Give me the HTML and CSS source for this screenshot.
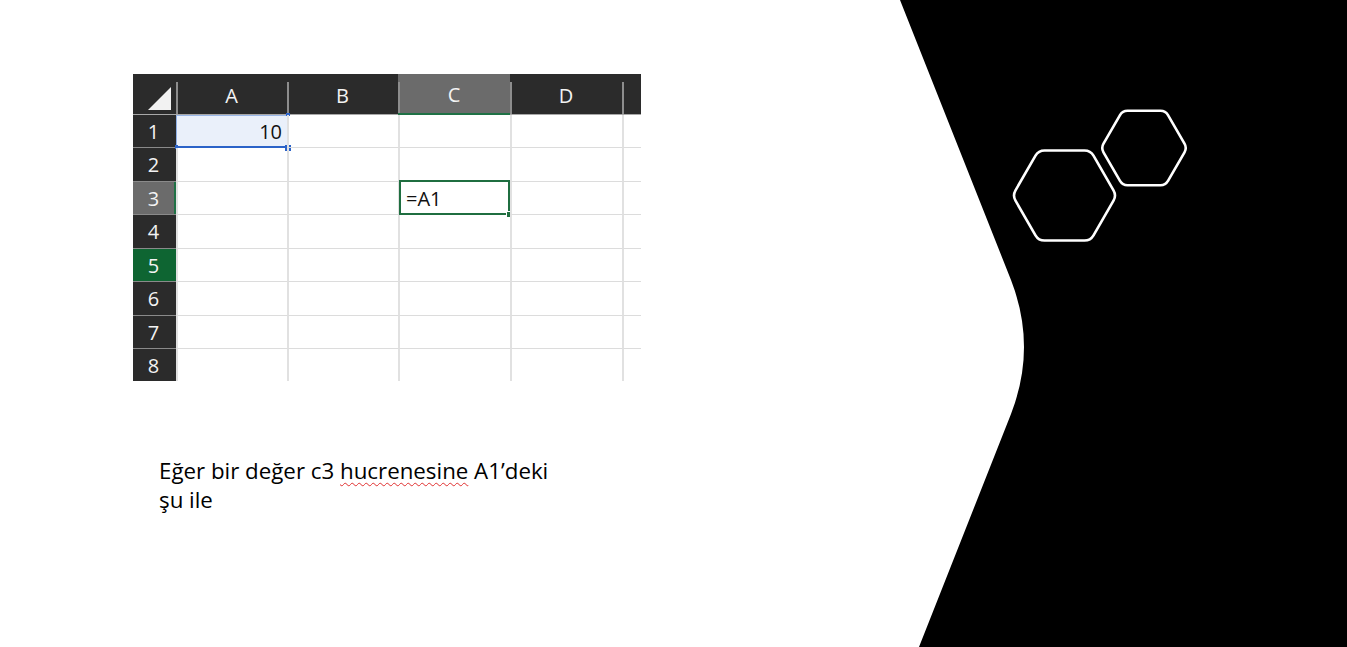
FILE: index.html
```html
<!DOCTYPE html>
<html lang="tr">
<head>
<meta charset="utf-8">
<title>Excel</title>
<link rel="stylesheet" href="styles.css">
</head>
<body>
<div class="slide">
  <div class="sheet">
    <div class="corner"><svg width="43" height="41" viewBox="0 0 43 41"><polygon points="15,36 38,36 38,13" fill="#f2f2f2"/></svg></div>
    <div class="ch">A</div>
    <div class="ch">B</div>
    <div class="ch ch-sel">C</div>
    <div class="ch">D</div>
    <div class="ch ch-last"></div>

    <div class="rh">1</div>
    <div class="cell cell-a1">10<span class="h h-tr"></span><span class="h h-bl"></span><span class="h h-br"></span></div>
    <div class="cell"></div><div class="cell"></div><div class="cell"></div><div class="cell"></div>

    <div class="rh">2</div>
    <div class="cell"></div><div class="cell"></div><div class="cell"></div><div class="cell"></div><div class="cell"></div>

    <div class="rh rh-sel">3</div>
    <div class="cell"></div><div class="cell"></div>
    <div class="cell cell-c3">=A1<span class="g-br"></span></div>
    <div class="cell"></div><div class="cell"></div>

    <div class="rh">4</div>
    <div class="cell"></div><div class="cell"></div><div class="cell"></div><div class="cell"></div><div class="cell"></div>

    <div class="rh rh-hover">5</div>
    <div class="cell"></div><div class="cell"></div><div class="cell"></div><div class="cell"></div><div class="cell"></div>

    <div class="rh">6</div>
    <div class="cell"></div><div class="cell"></div><div class="cell"></div><div class="cell"></div><div class="cell"></div>

    <div class="rh">7</div>
    <div class="cell"></div><div class="cell"></div><div class="cell"></div><div class="cell"></div><div class="cell"></div>

    <div class="rh rh-last">8</div>
    <div class="cell cell-last"></div><div class="cell cell-last"></div><div class="cell cell-last"></div><div class="cell cell-last"></div><div class="cell cell-last"></div>
  </div>

  <p class="caption">Eğer bir değer c3 <span class="spell">hucrenesine</span> A1’deki<br>şu ile</p>
</div>

<svg class="deco" width="447" height="647" viewBox="900 0 447 647">
  <path d="M900,0 L1011,280 Q1037,347 1011,414 L919,647 L1347,647 L1347,0 Z" fill="#000"/>
  <path d="M1015.5,190.3 L1035.5,155.7 Q1038.5,150.5 1044.5,150.5 L1084.5,150.5 Q1090.5,150.5 1093.5,155.7 L1113.5,190.3 Q1116.5,195.5 1113.5,200.7 L1093.5,235.3 Q1090.5,240.5 1084.5,240.5 L1044.5,240.5 Q1038.5,240.5 1035.5,235.3 L1015.5,200.7 Q1012.5,195.5 1015.5,190.3 Z" fill="none" stroke="#fff" stroke-width="2.6"/>
  <path d="M1103.5,143.7 L1120,115.1 Q1122.5,110.8 1127.5,110.8 L1160.5,110.8 Q1165.5,110.8 1168,115.1 L1184.5,143.7 Q1187,148 1184.5,152.3 L1168,180.9 Q1165.5,185.2 1160.5,185.2 L1127.5,185.2 Q1122.5,185.2 1120,180.9 L1103.5,152.3 Q1101,148 1103.5,143.7 Z" fill="none" stroke="#fff" stroke-width="2.6"/>
</svg>
</body>
</html>
```

FILE: styles.css
```css
html, body {
  margin: 0;
  padding: 0;
  background: #fff;
}

body {
  width: 1347px;
  height: 647px;
  overflow: hidden;
  position: relative;
  font-family: "Open Sans", "Noto Sans", sans-serif;
}

.slide {
  padding: 74px 0 0 133px;
}

.sheet {
  display: grid;
  grid-template-columns: 43px 111px 111px 112px 112px 19px;
  grid-template-rows: 41px 33px 34px 33px 34px 33px 34px 33px 32px;
  width: 508px;
  background: #fff;
}

.corner {
  background: #2b2b2b;
  border-bottom: 1px solid #a8a8a8;
}

.corner svg {
  display: block;
}

.ch {
  color: #f3f3f3;
  font-size: 20px;
  display: flex;
  align-items: center;
  justify-content: center;
  padding-top: 2px;
  box-sizing: border-box;
  border-bottom: 1px solid #a8a8a8;
  background: linear-gradient(#8d8d8d, #8d8d8d) 0 8px / 2px 32px no-repeat, #2b2b2b;
}

.ch-sel {
  background: linear-gradient(#8d8d8d, #8d8d8d) 0 8px / 2px 32px no-repeat, #6b6b6b;
  border-bottom: 2px solid #1f7145;
}

.rh {
  background: #2b2b2b;
  color: #f3f3f3;
  font-size: 20px;
  display: flex;
  align-items: center;
  justify-content: center;
  padding-right: 2px;
  box-sizing: border-box;
  border-bottom: 1px solid #8a8a8a;
}

.rh-last {
  border-bottom: none;
}

.rh-sel {
  background: #6b6b6b;
  box-shadow: inset -2px 0 0 #1f7145;
}

.rh-hover {
  background: #0e6532;
}

.cell {
  border-left: 2px solid #e1e1e1;
  border-bottom: 1px solid #dcdcdc;
  box-sizing: border-box;
  font-size: 20px;
  color: #111;
  display: flex;
  align-items: center;
  position: relative;
}

.cell-last {
  border-bottom: none;
}

.cell-a1 {
  background: #eaf0fa;
  justify-content: flex-end;
  padding-right: 5px;
  padding-top: 1px;
  border-left: 1px solid #8fb0e6;
}

.cell-a1::before {
  content: "";
  position: absolute;
  left: -1px;
  top: 0;
  right: -2px;
  bottom: -1px;
  border-right: 2px solid #2c63c8;
  border-bottom: 2px solid #2c63c8;
  border-top: 1px solid #9ab7e8;
}

.h {
  position: absolute;
  background: #2c63c8;
}

.h-tr {
  top: -2px;
  right: -3px;
  width: 4px;
  height: 3px;
}

.h-bl {
  bottom: -2px;
  left: -2px;
  width: 3px;
  height: 4px;
}

.h-br {
  bottom: -4px;
  right: -4px;
  width: 6px;
  height: 6px;
}

.cell-c3 {
  padding-left: 6px;
  padding-top: 1px;
}

.cell-c3::before {
  content: "";
  position: absolute;
  left: -1px;
  top: -2px;
  right: 0;
  bottom: -1px;
  border: 2px solid #1f6e40;
}

.g-br {
  position: absolute;
  right: -2px;
  bottom: -3px;
  width: 5px;
  height: 5px;
  background: #1f6e40;
  border-left: 1px solid #fff;
  border-top: 1px solid #fff;
}

.caption {
  margin: 75px 0 0 26px;
  font-size: 22.3px;
  line-height: 29px;
  color: #000;
}

.spell {
  text-decoration: underline wavy #e03030;
  text-decoration-thickness: 1px;
  text-underline-offset: 3px;
}

.deco {
  position: absolute;
  top: 0;
  right: 0;
  display: block;
}
```
